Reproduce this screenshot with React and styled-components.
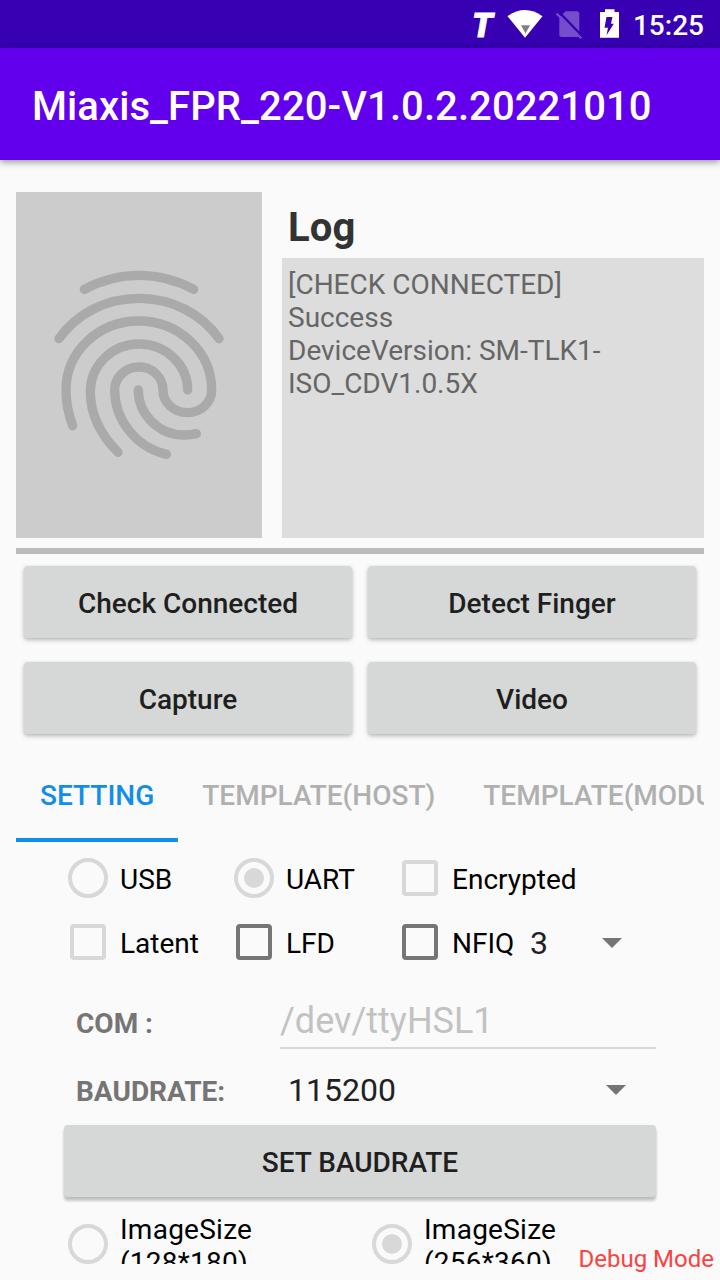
import React from "react";
import styled, { createGlobalStyle } from "styled-components";

const GlobalStyle = createGlobalStyle`
  *, *::before, *::after { box-sizing: border-box; }
  body { margin: 0; background: #fafafa; font-family: Roboto, sans-serif; }
`;

const Screen = styled.div`
  position: relative;
  display: flex;
  flex-direction: column;
  width: 720px;
  height: 1280px;
  overflow: hidden;
  background: #fafafa;
`;

const StatusBar = styled.header`
  display: flex;
  align-items: center;
  justify-content: flex-end;
  flex: none;
  height: 48px;
  padding-right: 16px;
  background: #3700b3;
  color: #fff;
`;

const CarrierMark = styled.span`
  width: 28px;
  margin-right: 7px;
  font-size: 34px;
  font-weight: 900;
  font-style: italic;
  line-height: 48px;
  padding-top: 2px;
  -webkit-text-stroke: 0.9px #fff;
`;

const StatusIcon = styled.svg`
  display: block;
  width: ${(p) => p.$width}px;
  height: 48px;
  margin-right: ${(p) => p.$gap}px;
`;

const Clock = styled.span`
  padding-top: 3px;
  font-size: 28px;
  font-weight: 500;
  line-height: 48px;
`;

const AppBar = styled.div`
  display: flex;
  align-items: center;
  flex: none;
  height: 112px;
  padding: 6px 32px 0;
  background: #6200ee;
  box-shadow: 0 2px 7px rgba(0, 0, 0, 0.42);
`;

const Title = styled.h1`
  margin: 0;
  color: #fff;
  font-size: 40px;
  font-weight: 500;
  letter-spacing: 0.08px;
  line-height: 48px;
  white-space: nowrap;
`;

const Content = styled.main`
  display: flex;
  flex-direction: column;
  flex: 1;
  min-height: 0;
  padding: 32px 16px 16px;
`;

const Overview = styled.section`
  display: flex;
  flex: none;
  gap: 20px;
  height: 346px;
`;

const ScanPanel = styled.div`
  width: 246px;
  background: #ccc;
`;

const LogColumn = styled.div`
  display: flex;
  flex-direction: column;
  flex: 1;
`;

const LogTitle = styled.h2`
  flex: none;
  height: 66px;
  margin: 0;
  padding: 12px 6px 0;
  color: #333;
  font-size: 40px;
  font-weight: 700;
  letter-spacing: 0.2px;
  line-height: 47px;
`;

const LogBox = styled.div`
  flex: 1;
  padding: 10px 6px;
  background: #ddd;
  color: #666;
  font-size: 28px;
  line-height: 33px;
`;

const Divider = styled.div`
  flex: none;
  height: 6px;
  margin: 10px 0 12px;
  background: #bbb;
`;

const Actions = styled.section`
  display: grid;
  grid-template-columns: 1fr 1fr;
  gap: 24px 16px;
  padding: 0 8px;
`;

const Button = styled.button`
  height: 72px;
  padding: 3px 0 0;
  border: 0;
  border-radius: 4px;
  background: #d6d8d7;
  box-shadow: 0 2px 4px rgba(0, 0, 0, 0.28), 0 0 2px rgba(0, 0, 0, 0.06);
  color: #1e1f1e;
  font: 500 28px Roboto, sans-serif;
`;

const Tabs = styled.nav`
  display: flex;
  flex: none;
  height: 96px;
  margin-top: 12px;
  overflow: hidden;
`;

const Tab = styled.div`
  flex: none;
  padding: 0 24px;
  border-bottom: 4px solid ${(p) => (p.$active ? "#118eea" : "transparent")};
  color: ${(p) => (p.$active ? "#118eea" : "#b0b0b0")};
  font-size: 28px;
  font-weight: 500;
  line-height: 99px;
`;

const Settings = styled.section`
  display: flex;
  flex-direction: column;
  flex: 1;
  min-height: 0;
  padding: 4px 48px 0 40px;
  overflow: hidden;
`;

const OptionRow = styled.div`
  display: flex;
  flex: none;
  height: 64px;
`;

const Option = styled.label`
  display: flex;
  align-items: center;
  width: ${(p) => p.$width}px;
  color: #000;
  font-size: 28px;
  line-height: 33px;
`;

const Control = styled.span`
  display: flex;
  align-items: center;
  justify-content: center;
  flex: none;
  width: 64px;
`;

const RadioRing = styled.span`
  display: flex;
  align-items: center;
  justify-content: center;
  width: 40px;
  height: 40px;
  border: 4px solid #d8d8d8;
  border-radius: 50%;
`;

const RadioDot = styled.span`
  width: 20px;
  height: 20px;
  border-radius: 50%;
  background: #d8d8d8;
`;

const Box = styled.span`
  width: 36px;
  height: 36px;
  border: 4px solid ${(p) => (p.$disabled ? "#d8d8d8" : "#757575")};
  border-radius: 4px;
`;

const Label = styled.span`
  padding-top: 3px;
`;

const Spinner = styled.div`
  display: flex;
  align-items: center;
  justify-content: space-between;
  width: ${(p) => p.$width}px;
  padding-top: ${(p) => p.$inset || 0}px;
  color: #212121;
  font-size: 32px;
  line-height: 38px;
`;

const Arrow = styled.span`
  width: 0;
  height: 0;
  border: 10px solid transparent;
  border-top-color: #757575;
  border-bottom: 0;
`;

const Field = styled.div`
  display: flex;
  align-items: center;
  flex: none;
  height: ${(p) => p.$height}px;
  margin-top: ${(p) => p.$top}px;
  padding-left: 20px;
`;

const FieldLabel = styled.span`
  width: ${(p) => p.$width}px;
  padding-top: 3px;
  color: #757575;
  font-size: 28px;
  font-weight: 700;
  line-height: 33px;
`;

const PortInput = styled.div`
  width: 376px;
  height: 54px;
  border-bottom: 2px solid #d6d6d6;
  color: #c2c2c2;
  font-size: 36px;
  line-height: 53px;
`;

const WideButton = styled(Button)`
  flex: none;
  width: 592px;
  margin: 9px 0 0 8px;
  box-shadow: 0 4px 3px rgba(0, 0, 0, 0.2), 0 1px 3px rgba(0, 0, 0, 0.1);
`;

const SizeRow = styled.div`
  display: flex;
  flex: none;
  height: 66px;
  margin-top: 14px;
  letter-spacing: 0.25px;
`;

const DebugTag = styled.div`
  position: absolute;
  right: 6px;
  bottom: 6px;
  color: #ff4040;
  font-size: 24px;
  line-height: 30px;
`;

function Radio({ checked, width, children }) {
  return (
    <Option $width={width}>
      <Control>
        <RadioRing>{checked && <RadioDot />}</RadioRing>
      </Control>
      <Label>{children}</Label>
    </Option>
  );
}

function Checkbox({ disabled, width, children }) {
  return (
    <Option $width={width}>
      <Control>
        <Box $disabled={disabled} />
      </Control>
      <Label>{children}</Label>
    </Option>
  );
}

function Fingerprint() {
  return (
    <svg width="246" height="346" viewBox="18 36 738 1038" fill="none" stroke="#aaa" strokeWidth="28" strokeLinecap="round">
      <path d="M223 328C273 301 327 286 387 286S501 301 551 328" />
      <path d="M147 476C199 402 287 355 387 355S575 402 627 476" />
      <path d="M188 737C175 702 168 667 168 630C168 515 266 423 386 423C507 423 605 515 605 630C605 668 572 698 532 698C492 698 459 668 459 630C459 592 427 561 387 561C347 561 314 592 314 630C314 721 379 802 469 823" />
      <path d="M324 817C271 763 241 703 241 635C241 556 306 492 387 492C467 492 533 554 533 630" />
      <path d="M385 630C385 703 446 765 522 765C535 765 546 764 559 761" />
    </svg>
  );
}

export default function App() {
  return (
    <>
      <GlobalStyle />
      <Screen>
        <StatusBar>
          <CarrierMark>T</CarrierMark>
          <StatusIcon $width={36} $gap={12} viewBox="507 0 36 48">
            <path d="M507.500 16.200Q525 3.600 542.500 16.200L525 37.700Z" fill="#fff" />
            <path d="M521 25.300H530L525.500 33.500Z" fill="#808080" />
          </StatusIcon>
          <StatusIcon $width={28} $gap={16} viewBox="555 0 28 48">
            <path d="M559.300 17.500L565.500 11.200H576.800Q579.300 11.200 579.300 13.700V34.500Q579.300 37 576.800 37H561.800Q559.300 37 559.300 34.500Z" fill="#754dca" />
            <path d="M558.500 11.500L582.500 36.500" stroke="#3700b3" strokeWidth="2.400" />
            <path d="M556.500 13.500L581.300 38.300" stroke="#754dca" strokeWidth="2.200" />
          </StatusIcon>
          <StatusIcon $width={20} $gap={14} viewBox="599 0 20 48">
            <path d="M600 12H605V9.300H614.500V12H619V37.800H600Z" fill="#fff" />
            <path d="M606.500 17H612.500L610.900 23.800H613.800L606.500 35.200L608 27.800H604.500Z" fill="#3700b3" />
          </StatusIcon>
          <Clock>15:25</Clock>
        </StatusBar>
        <AppBar>
          <Title>Miaxis_FPR_220-V1.0.2.20221010</Title>
        </AppBar>
        <Content>
          <Overview>
            <ScanPanel>
              <Fingerprint />
            </ScanPanel>
            <LogColumn>
              <LogTitle>Log</LogTitle>
              <LogBox>
                [CHECK CONNECTED]
                <br />
                Success
                <br />
                DeviceVersion: SM-TLK1-
                <br />
                ISO_CDV1.0.5X
              </LogBox>
            </LogColumn>
          </Overview>
          <Divider />
          <Actions>
            <Button>Check Connected</Button>
            <Button>Detect Finger</Button>
            <Button>Capture</Button>
            <Button>Video</Button>
          </Actions>
          <Tabs>
            <Tab $active>SETTING</Tab>
            <Tab>TEMPLATE(HOST)</Tab>
            <Tab>TEMPLATE(MODULE)</Tab>
          </Tabs>
          <Settings>
            <OptionRow>
              <Radio width={166}>USB</Radio>
              <Radio width={166} checked>UART</Radio>
              <Checkbox width={200} disabled>Encrypted</Checkbox>
            </OptionRow>
            <OptionRow>
              <Checkbox width={166} disabled>Latent</Checkbox>
              <Checkbox width={166}>LFD</Checkbox>
              <Checkbox width={142}>NFIQ</Checkbox>
              <Spinner $width={92} $inset={2}>
                <span>3</span>
                <Arrow />
              </Spinner>
            </OptionRow>
            <Field $top={21} $height={54}>
              <FieldLabel $width={204}>COM :</FieldLabel>
              <PortInput>/dev/ttyHSL1</PortInput>
            </Field>
            <Field $top={14} $height={53}>
              <FieldLabel $width={212}>BAUDRATE:</FieldLabel>
              <Spinner $width={338}>
                <span>115200</span>
                <Arrow />
              </Spinner>
            </Field>
            <WideButton>SET BAUDRATE</WideButton>
            <SizeRow>
              <Radio width={304}>
                ImageSize
                <br />
                (128*180)
              </Radio>
              <Radio width={248} checked>
                ImageSize
                <br />
                (256*360)
              </Radio>
            </SizeRow>
          </Settings>
        </Content>
        <DebugTag>Debug Mode</DebugTag>
      </Screen>
    </>
  );
}
